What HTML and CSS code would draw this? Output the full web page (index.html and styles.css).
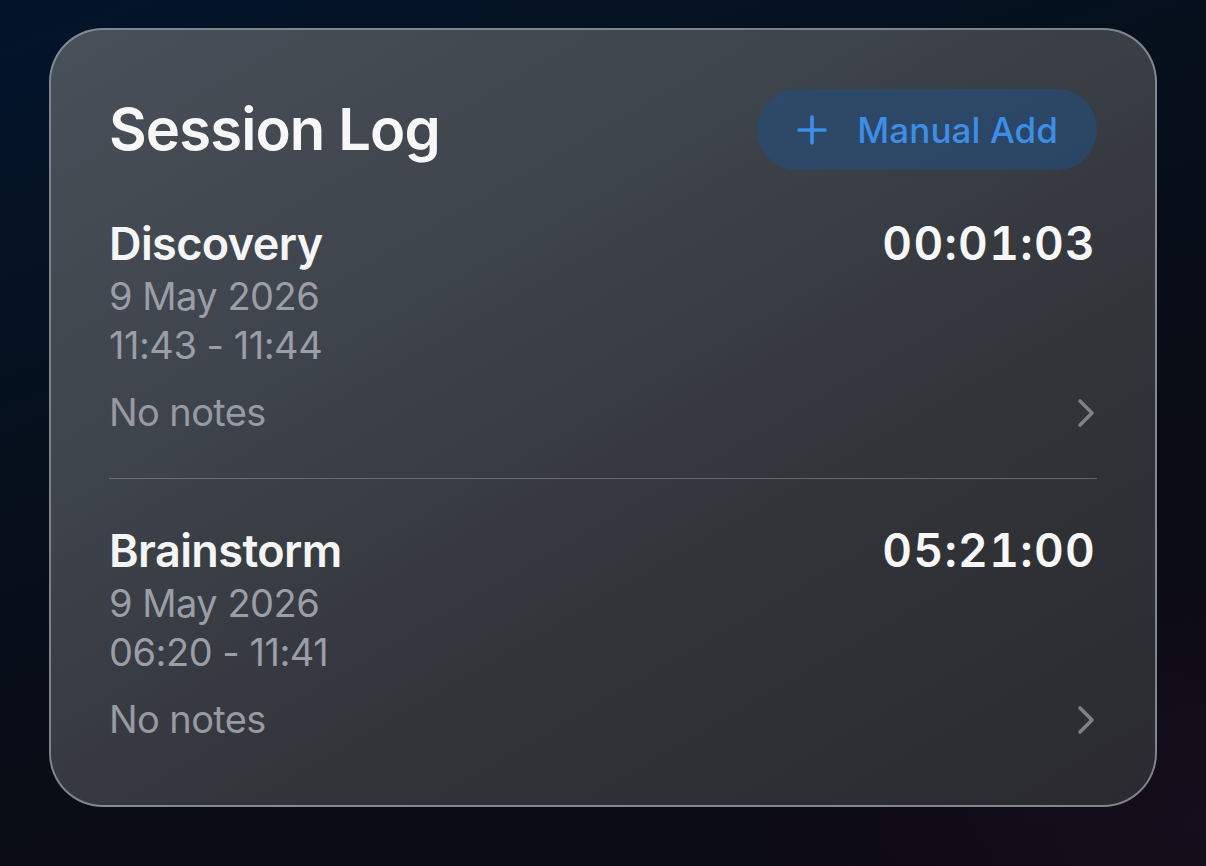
FILE: index.html
```html
<!DOCTYPE html>
<html lang="en">
<head>
<meta charset="utf-8">
<title>Session Log</title>
<link rel="stylesheet" href="styles.css">
</head>
<body>
<main class="stage">
  <section class="card">
    <header class="card-head">
      <h1 class="title">Session Log</h1>
      <button class="add-btn" type="button">
        <svg class="plus" viewBox="0 0 30 30" aria-hidden="true"><path d="M15 2 V28 M2 15 H28"/></svg>
        <span>Manual Add</span>
      </button>
    </header>
    <ul class="sessions">
      <li class="session">
        <div class="row">
          <span class="name">Discovery</span>
          <span class="duration">00:01:03</span>
        </div>
        <div class="meta">9 May 2026</div>
        <div class="meta">11:43 - 11:44</div>
        <div class="notes-row">
          <span class="notes">No notes</span>
          <svg class="chev" viewBox="0 0 20 32" aria-hidden="true"><path d="M4 4 L16 16 L4 28"/></svg>
        </div>
      </li>
      <li class="session">
        <div class="row">
          <span class="name">Brainstorm</span>
          <span class="duration">05:21:00</span>
        </div>
        <div class="meta">9 May 2026</div>
        <div class="meta">06:20 - 11:41</div>
        <div class="notes-row">
          <span class="notes">No notes</span>
          <svg class="chev" viewBox="0 0 20 32" aria-hidden="true"><path d="M4 4 L16 16 L4 28"/></svg>
        </div>
      </li>
    </ul>
  </section>
</main>
</body>
</html>
```
FILE: styles.css
```css
* { box-sizing: border-box; }
html, body { margin: 0; height: 100%; }
body {
  font-family: Inter, "Noto Sans", "Liberation Sans", sans-serif;
  background:
    radial-gradient(ellipse 60% 50% at 100% 95%, rgba(40, 20, 50, 0.35), transparent 70%),
    linear-gradient(160deg, #03142a 0%, #06101d 35%, #0a0c14 70%, #0b0a10 100%);
  color: #fff;
}
.stage {
  padding: 28px 49px 0 49px;
}
.card {
  width: 1108px;
  height: 779px;
  border-radius: 54px;
  border: 2px solid rgba(146, 152, 162, 0.8);
  background: linear-gradient(150deg, #485059 0%, #3d434b 35%, #323439 65%, #2a2a2f 100%);
  padding: 59px 58px 0 58px;
}
.card-head {
  display: flex;
  justify-content: space-between;
  align-items: center;
  height: 81px;
  margin-bottom: 2px;
}
.title {
  margin: 0;
  font-size: 58px;
  font-weight: 600;
  letter-spacing: -0.9px;
  line-height: 81px;
  color: #f7f7f8;
}
.add-btn {
  display: flex;
  align-items: center;
  gap: 30px;
  height: 81px;
  padding: 0 39px 0 40px;
  border: none;
  border-radius: 41px;
  background: rgba(34, 78, 130, 0.55);
  color: #3c8ee9;
  font-family: inherit;
  font-size: 35px;
  font-weight: 500;
  letter-spacing: 0.1px;
}
.plus {
  width: 30px;
  height: 30px;
  fill: none;
  stroke: #3c8ee9;
  stroke-width: 3.6;
  stroke-linecap: round;
}
.sessions {
  list-style: none;
  margin: 0;
  padding: 0;
}
.session {
  padding: 43px 0 41px 0;
}
.session + .session {
  border-top: 1px solid rgba(160, 164, 172, 0.45);
}
.row {
  display: flex;
  justify-content: space-between;
  align-items: baseline;
  line-height: 56px;
}
.name {
  font-size: 45px;
  font-weight: 600;
  letter-spacing: -0.6px;
  color: #f5f5f6;
}
.duration {
  font-size: 46px;
  font-weight: 600;
  color: #f7f7f8;
  font-variant-numeric: tabular-nums;
  letter-spacing: 1.3px;
  margin-right: 1px;
}
.meta {
  font-size: 38px;
  line-height: 49px;
  letter-spacing: -0.5px;
  color: #9a9ea6;
}
.notes-row {
  display: flex;
  justify-content: space-between;
  align-items: center;
  margin-top: 18px;
  height: 49px;
}
.notes {
  font-size: 38px;
  line-height: 49px;
  letter-spacing: -0.6px;
  color: #969aa1;
}
.chev {
  width: 20px;
  height: 32px;
  margin-right: 1px;
  fill: none;
  stroke: #7f8187;
  stroke-width: 3.6;
  stroke-linecap: round;
  stroke-linejoin: round;
}
```
